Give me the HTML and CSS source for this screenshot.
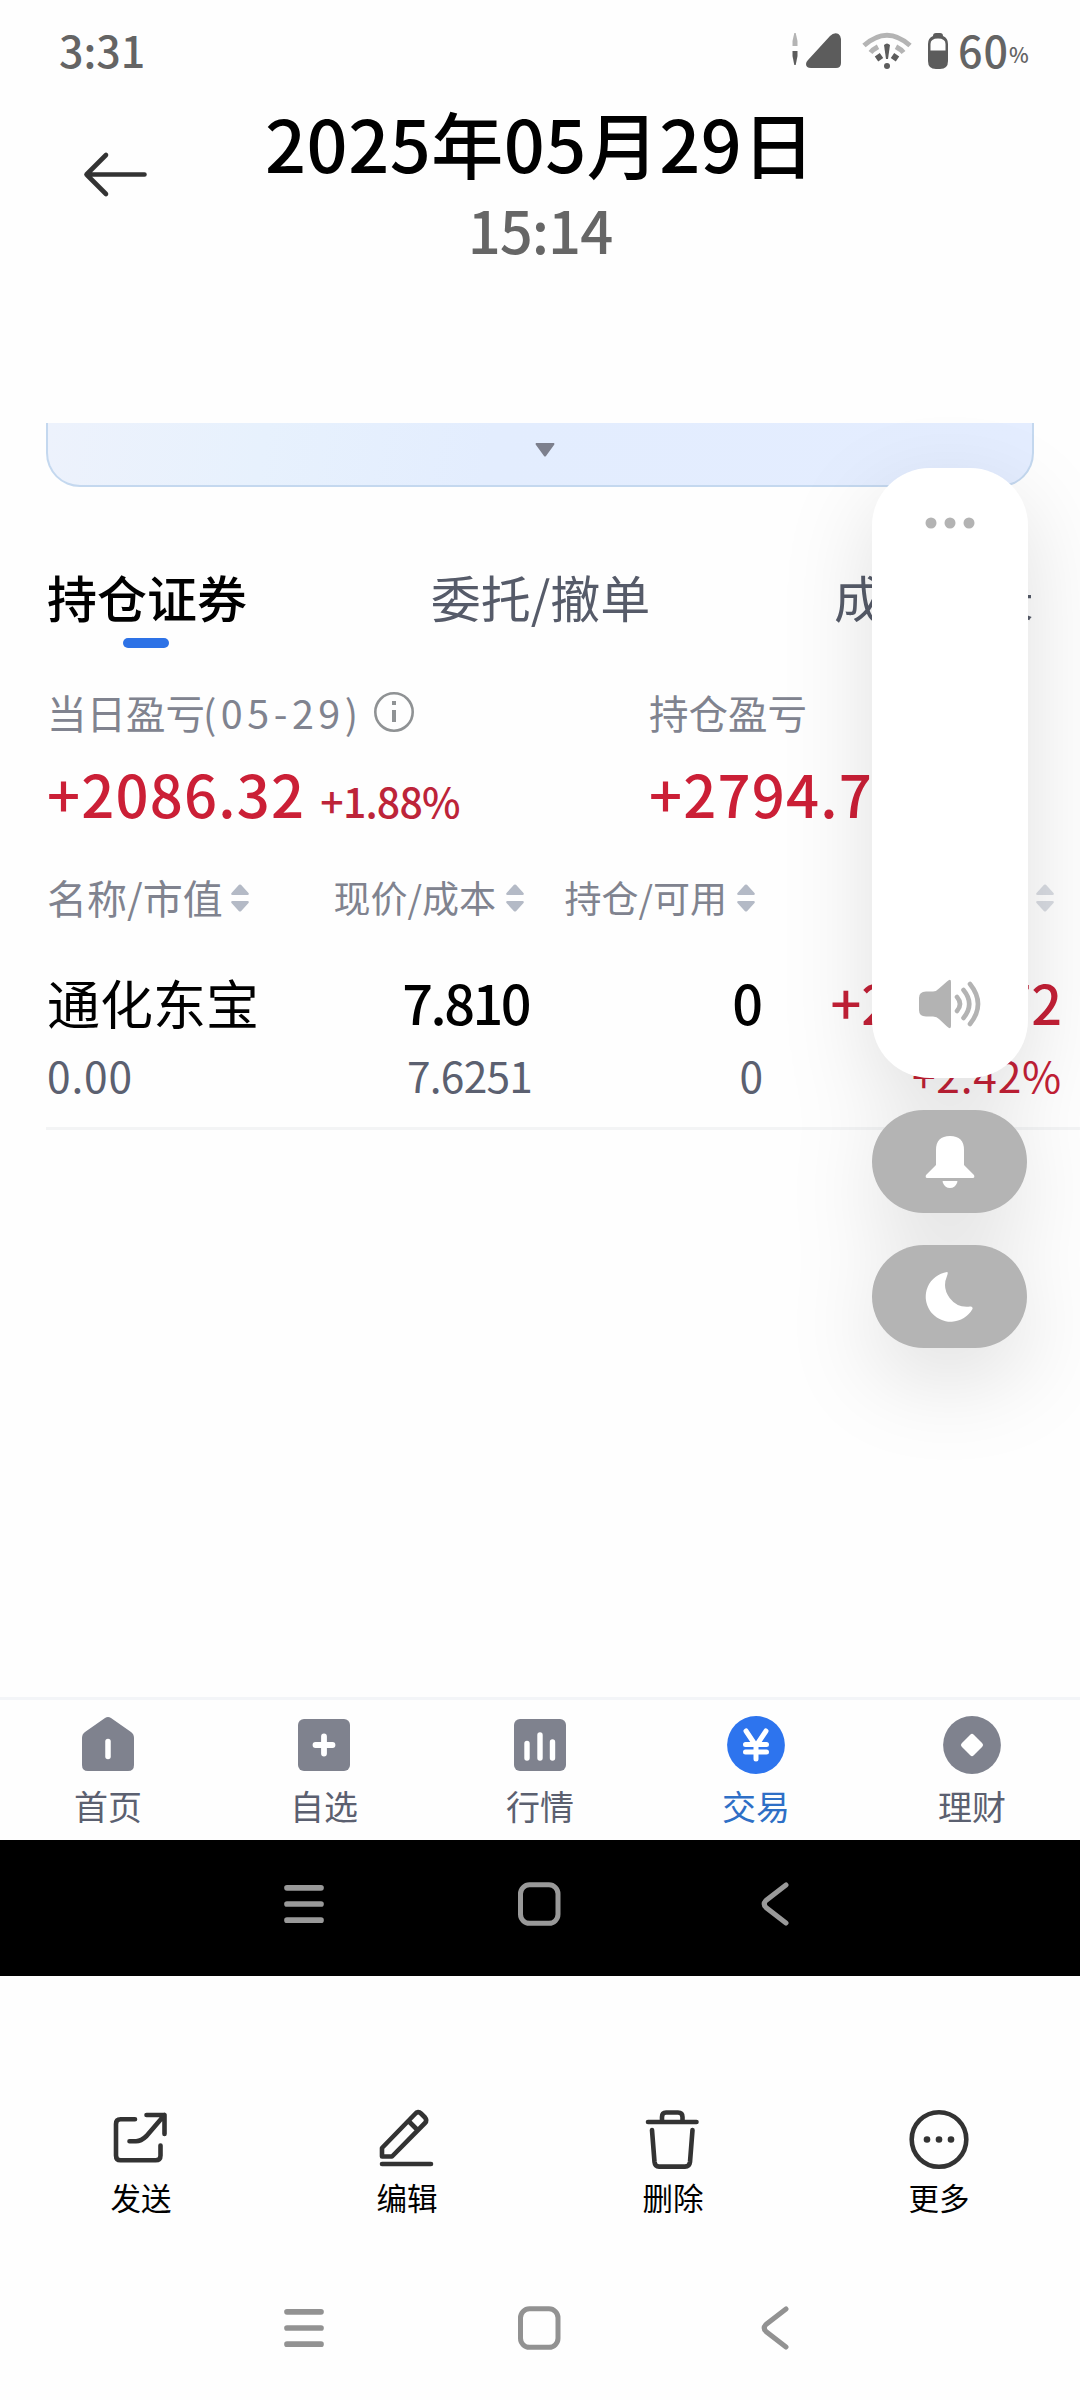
FILE: index.html
```html
<!DOCTYPE html>
<html lang="zh-CN">
<head>
<meta charset="utf-8">
<title>2025年05月29日</title>
<link rel="stylesheet" href="styles.css">
</head>
<body>
<svg width="0" height="0" class="defs" aria-hidden="true">
  <symbol id="sort" viewBox="0 0 18 28"><path d="M8 .8Q9 0 10 .8L17.500 9Q18.500 11 16.500 11H1.500Q-.5 11 .5 9ZM8 27.200Q9 28 10 27.200L17.500 19Q18.500 17 16.500 17H1.500Q-.5 17 .5 19Z"/></symbol>
  <symbol id="menu" viewBox="0 0 44 48"><path d="M5 7.800H39M5 24H39M5 40.200H39" fill="none" stroke="currentColor" stroke-width="5.700" stroke-linecap="round"/></symbol>
  <symbol id="home" viewBox="0 0 44 48"><rect x="3.500" y="4.800" width="37.500" height="38.500" rx="9" fill="none" stroke="currentColor" stroke-width="5"/></symbol>
  <symbol id="back" viewBox="0 0 44 48"><path d="M34 5 14 20.500Q10.500 24 14 27.500L34 43" fill="none" stroke="currentColor" stroke-width="5" stroke-linecap="round"/></symbol>
</svg>

<header class="status">
  <span class="clock">3:31</span>
  <div class="status-icons">
    <svg width="50" height="40" viewBox="0 0 50 40"><path d="M2.300 1H3.700L5.500 9V14H.5V9Z" fill="#b4b4b4"/><path d="M.5 19H5.500V24L3.700 33H2.300L.5 24Z" fill="#5c5c5c"/><path d="M16 28 38 4Q42 0 46.500 2Q49 4 49 7V31Q49 36 44 36H19Q14 36 14 32Q14 30 16 28Z" fill="#5c5c5c"/></svg>
    <svg class="wifi" width="50" height="40" viewBox="0 0 50 40" fill="none"><path d="M2 13.500Q25-7 48 13.500M8.500 20.500Q11 17.500 16 14.800M41.500 20.500Q39 17.500 34 14.800" stroke="#b4b4b4" stroke-width="5"/><path d="m14.500 27 5-3.500M35.500 27l-5-3.500" stroke="#5c5c5c" stroke-width="6"/><path d="M22 13Q25 10 28 13L26 27H24Z" fill="#5c5c5c"/><circle cx="25" cy="34" r="3" fill="#5c5c5c"/></svg>
    <svg class="battery" width="22" height="40" viewBox="0 0 22 40"><path d="M6 4Q6 1 9 1H13Q16 1 16 4Q21 6 21 12V29Q21 37 13 37H9Q1 37 1 29V12Q1 6 6 4Z" fill="#5c5c5c"/><path d="M3.500 18.500V12Q3.500 6.500 11 6.500T18.500 12V18.500Z" fill="#fefefe"/></svg>
    <span class="level">60</span><span class="percent">%</span>
  </div>
</header>

<section class="title">
  <svg class="arrow" width="66" height="48" viewBox="0 0 66 48"><path d="M24 4 4.500 23.500 24 43M4.500 23.500H62.500" fill="none" stroke="#333" stroke-width="4.600" stroke-linecap="round" stroke-linejoin="round"/></svg>
  <div class="title-text">
    <h1>2025年05月29日</h1>
    <p>15:14</p>
  </div>
</section>

<main class="photo">
  <div class="card"><svg width="20" height="14" viewBox="0 0 20 14"><path d="M1 0H19Q20 1 19 2L11 13Q10 14 9 13L1 2Q0 1 1 0Z" fill="#7d808d"/></svg></div>

  <nav class="tabs">
    <span class="tab active">持仓证券</span>
    <span class="tab">委托/撤单</span>
    <span class="tab">成交记录</span>
  </nav>

  <section class="summary">
    <div class="profit">
      <div class="label">当日盈亏<span class="date">(05-29)</span>
        <svg width="42" height="42" viewBox="0 0 42 42"><circle cx="21" cy="21" r="18.700" fill="none" stroke="#8f9294" stroke-width="2.600"/><path d="M21 10V14M21 19V31" stroke="#8f9294" stroke-width="4"/></svg>
      </div>
      <div class="value">+2086.32<small>+1.88%</small></div>
    </div>
    <div class="profit">
      <div class="label">持仓盈亏</div>
      <div class="value">+2794.72</div>
    </div>
  </section>

  <section class="grid head">
    <div class="first">名称/市值<svg class="sort"><use href="#sort"/></svg></div>
    <div>现价/成本<svg class="sort"><use href="#sort"/></svg></div>
    <div>持仓/可用<svg class="sort"><use href="#sort"/></svg></div>
    <div>盈亏<svg class="sort faint"><use href="#sort"/></svg></div>
  </section>
  <section class="holding">
    <div class="grid main-row"><div class="name">通化东宝</div><div class="price">7.810</div><div>0</div><div class="up">+2794.72</div></div>
    <div class="grid sub-row"><div class="worth">0.00</div><div class="cost">7.6251</div><div>0</div><div class="up ratio">+2.42%</div></div>
  </section>

  <nav class="bottom">
    <div class="item"><svg width="60" height="60" viewBox="0 0 60 60"><path d="M27 3Q30 .8 33 3L53 17Q56 19 56 23V50Q56 56 50 56H10Q4 56 4 50V23Q4 19 7 17Z" fill="#7f828e"/><path d="M30 26.500V41.500" stroke="#fff" stroke-width="5.500" stroke-linecap="round"/></svg><span>首页</span></div>
    <div class="item"><svg width="60" height="60" viewBox="0 0 60 60"><rect x="4" y="4" width="52" height="52" rx="6" fill="#7f828e"/><path d="M30 21.500V38.500M21.500 30H38.500" stroke="#fff" stroke-width="5.800" stroke-linecap="round"/></svg><span>自选</span></div>
    <div class="item"><svg width="60" height="60" viewBox="0 0 60 60"><rect x="4" y="4" width="52" height="52" rx="6" fill="#7f828e"/><path d="M17 28.500V43M30 20V43M42.500 27V43" stroke="#fff" stroke-width="5.400" stroke-linecap="round"/></svg><span>行情</span></div>
    <div class="item on"><svg width="60" height="60" viewBox="0 0 60 60"><circle cx="30" cy="30" r="28.900" fill="#2d74ee"/><path d="M20 16 30 31 40 16M30 31V44M19.500 29.500H40.500M19.500 37H40.500" fill="none" stroke="#fff" stroke-width="5" stroke-linecap="round" stroke-linejoin="round"/></svg><span>交易</span></div>
    <div class="item"><svg width="60" height="60" viewBox="0 0 60 60"><circle cx="30" cy="30" r="28.900" fill="#7f828e"/><path d="M30 21.500 38.500 30 30 38.500 21.500 30Z" fill="#fff" stroke="#fff" stroke-width="5" stroke-linejoin="round"/></svg><span>理财</span></div>
  </nav>

  <div class="sysbar dark"><svg><use href="#menu"/></svg><svg><use href="#home"/></svg><svg><use href="#back"/></svg></div>
</main>

<footer class="actions">
  <div class="action"><svg width="62" height="64" viewBox="0 0 62 64"><path d="M25 11.300H10.500Q6 11.300 6 16V47.500Q6 52.300 10.500 52.300H45.500Q50.500 52.300 50.500 47.500V37.500M36.500 7H54.500V26M54.500 7 36.500 28Q31 33.300 26 33.300H19.500"/></svg><span>发送</span></div>
  <div class="action"><svg width="62" height="64" viewBox="0 0 62 64"><path d="M6 56H55M6 48.500V40L39 6Q42 2.500 45 5.500L49 9.500Q51.500 12.500 49 15L16 48.500ZM33 13.500 41 21.500"/></svg><span>编辑</span></div>
  <div class="action"><svg width="62" height="64" viewBox="0 0 62 64"><path d="M6 14H54.500M20 13V9Q20 4.500 24 4.500H36Q40.500 4.500 40.500 9V13M10 22 12.500 54Q13 58.600 17 58.600H43Q47.500 58.600 48 54L50.500 22"/></svg><span>删除</span></div>
  <div class="action"><svg width="62" height="64" viewBox="0 0 62 64"><circle cx="31" cy="31.500" r="27.300"/><g fill="#333" stroke="none"><circle cx="19" cy="31.500" r="3.300"/><circle cx="31" cy="31.500" r="3.300"/><circle cx="43" cy="31.500" r="3.300"/></g></svg><span>更多</span></div>
</footer>
<div class="sysbar"><svg><use href="#menu"/></svg><svg><use href="#home"/></svg><svg><use href="#back"/></svg></div>

<aside class="volume">
  <div class="slider">
    <svg width="50" height="12" viewBox="0 0 50 12" fill="#b3b3b3"><circle cx="6" cy="6" r="5.500"/><circle cx="25" cy="6" r="5.500"/><circle cx="44" cy="6" r="5.500"/></svg>
    <svg width="64" height="52" viewBox="0 0 64 52"><path d="M8 13.500H15Q19 13 21 10.500L29 3.500Q33 0 33 4V48Q33 52 29 48.500L21 41Q19 38.500 15 38.500H8Q1 38.500 1 32V20Q1 13.500 8 13.500Z" fill="#b3b3b3"/><path d="M39 19Q45 26 39 33M45.500 12Q57 26 45.500 40M52 6Q68 26 52 46" fill="none" stroke="#b3b3b3" stroke-width="4.600" stroke-linecap="round"/></svg>
  </div>
  <div class="pill"><svg width="50" height="54" viewBox="0 0 50 54" fill="#fff"><path d="M11 30V15Q11 1 25 1T39 15V30L49 40Q50 43 48 43H2Q0 43 1 40ZM18 46H32Q33 46 32 48Q30 53 25 53T18 48Q17 46 18 46Z"/></svg></div>
  <div class="pill"><svg width="50" height="52" viewBox="0 0 50 52" fill="#fff"><path d="M22 1A25 25 0 1 0 47.500 38Q48 35 45 35.500A22 22 0 0 1 22 5Q23.500 1 22 1Z"/></svg></div>
</aside>
</body>
</html>
```
FILE: styles.css
```css
* { box-sizing: border-box; }
body {
  margin: 0;
  width: 1080px;
  height: 2400px;
  position: relative;
  overflow: hidden;
  background: #fefefe;
  color: #000;
  font-family: "Noto Sans CJK SC", "Noto Sans", sans-serif;
  display: flex;
  flex-direction: column;
}
body > * { flex: none; }
svg { display: block; flex: none; }
.defs { position: absolute; }

/* status bar */
.status {
  height: 98px;
  padding: 0 53px 0 59px;
  display: flex;
  justify-content: space-between;
  align-items: center;
  color: #646464;
  font-size: 43px;
  font-weight: 500;
  line-height: 96px;
}
.clock { letter-spacing: 0; }
.status-icons { display: flex; align-items: center; }
.status-icons svg { margin-top: 5px; }
.wifi { margin-left: 20px; }
.battery { margin: 0 9px 0 15px; }
.level { letter-spacing: 1px; }
.percent { font-size: 21px; line-height: 30px; margin: 10px 0 0 0; width: 18px; letter-spacing: -2px; }

/* date header */
.title { height: 325px; display: flex; position: relative; justify-content: center; }
.arrow { position: absolute; left: 82px; top: 53px; }
.title-text { text-align: center; margin-top: -1px; }
h1 { margin: 0; font-size: 72px; font-weight: 500; line-height: 90px; letter-spacing: 0.500px; }
.title-text p { margin: -2px 0 0; font-size: 58px; font-weight: 500; line-height: 88px; color: #666; letter-spacing: -1px; }

/* photographed app screen */
.photo { height: 1553px; display: flex; flex-direction: column; }
.photo > * { flex: none; }
.card {
  height: 64px;
  margin: 0 46px;
  padding: 20px 0 0 10px;
  display: flex;
  justify-content: center;
  border: 2.500px solid #c4d8ef;
  border-top: 0;
  border-radius: 0 0 34px 34px;
  background: linear-gradient(100deg, #edf2fc 0%, #e7f1fd 22%, #e3edfe 45%, #e4edff 100%);
}
.tabs {
  height: 178px;
  padding: 74px 46px 0 47px;
  display: flex;
  justify-content: space-between;
  font-size: 50px;
  line-height: 70px;
  color: #565b69;
}
.tab.active { color: #000; font-weight: 500; }
.tab.active::after {
  content: "";
  display: block;
  width: 46px;
  height: 10px;
  margin: 7px 0 0 76px;
  border-radius: 5px;
  background: #2d72e6;
}
.summary { height: 187px; padding: 17px 0 0 47px; display: grid; grid-template-columns: 602px 1fr; }
.label { display: flex; align-items: center; height: 60px; font-size: 39.500px; line-height: 60px; color: #80838f; }
.date { letter-spacing: 4.500px; margin-left: -2px; }
.label svg { margin: 0 0 0 10px; }
.value { margin-top: 11px; font-size: 58px; font-weight: 500; line-height: 80px; letter-spacing: 1.200px; color: #cb1f36; }
.value small { font-size: 41px; letter-spacing: -0.800px; margin-left: 15px; color: #bd2439; }

/* holdings table */
.grid { display: grid; grid-template-columns: 260px 225px 231px 299px; padding-left: 47px; text-align: right; }
.grid > :first-child { text-align: left; }
.head { height: 88px; color: #80838f; font-size: 37px; line-height: 86px; }
.head > div { display: flex; justify-content: flex-end; align-items: center; padding: 2px 8px 0 0; height: 88px; }
.head > .first { justify-content: flex-start; font-size: 40px; }
.sort { width: 18px; height: 28px; margin: 2px 0 0 10px; fill: #b4bac6; }
.first .sort { margin-left: 8px; }
.faint { opacity: .5; }
.holding { height: 190px; margin-left: 46px; border-bottom: 3px solid #f3f4f5; padding-top: 24px; }
.holding .grid { padding-left: 1px; }
.main-row { font-size: 54px; font-weight: 500; line-height: 76px; }
.name { font-size: 53px; font-weight: 400; }
.price { letter-spacing: -2.500px; padding-right: 3px; }
.sub-row { font-size: 42.500px; line-height: 70px; color: #5b6070; }
.worth { letter-spacing: 0.800px; }
.cost { letter-spacing: -0.800px; }
.up { color: #c32036; }
.ratio { letter-spacing: 0.800px; }

/* app navigation */
.bottom { margin-top: auto; height: 143px; border-top: 3px solid #f3f5f8; display: grid; grid-template-columns: repeat(5, 1fr); color: #5b6070; }
.item { display: flex; flex-direction: column; align-items: center; padding-top: 15px; font-size: 34px; line-height: 48px; }
.item span { margin-top: 7px; }
.on { color: #2e6fc6; }

/* system navigation */
.sysbar { height: 140px; padding: 44px 282px 0; display: flex; gap: 191px; color: #929292; }
.sysbar svg { width: 44px; height: 48px; }
.dark { height: 136px; padding-top: 40px; background: #000; color: #999; }

.actions { height: 284px; padding: 132px 8px 0; display: grid; grid-template-columns: repeat(4, 266px); }
.action { display: flex; flex-direction: column; align-items: center; font-size: 30.500px; line-height: 44px; }
.action svg { fill: none; stroke: #333; stroke-width: 4.600; stroke-linecap: round; stroke-linejoin: round; }
.action span { margin-top: 3px; }

/* volume overlay */
.volume {
  position: absolute;
  left: 872px;
  top: 468px;
  width: 156px;
  filter: drop-shadow(0 30px 44px rgba(0, 0, 0, .12));
}
.slider {
  height: 610px;
  margin-bottom: 32px;
  padding: 49px 0 48px;
  border-radius: 58px;
  background: #fff;
  display: flex;
  flex-direction: column;
  justify-content: space-between;
  align-items: center;
}
.pill { width: 155px; height: 103px; margin-bottom: 32px; border-radius: 52px; background: #b4b4b4; display: flex; align-items: center; justify-content: center; }
```
